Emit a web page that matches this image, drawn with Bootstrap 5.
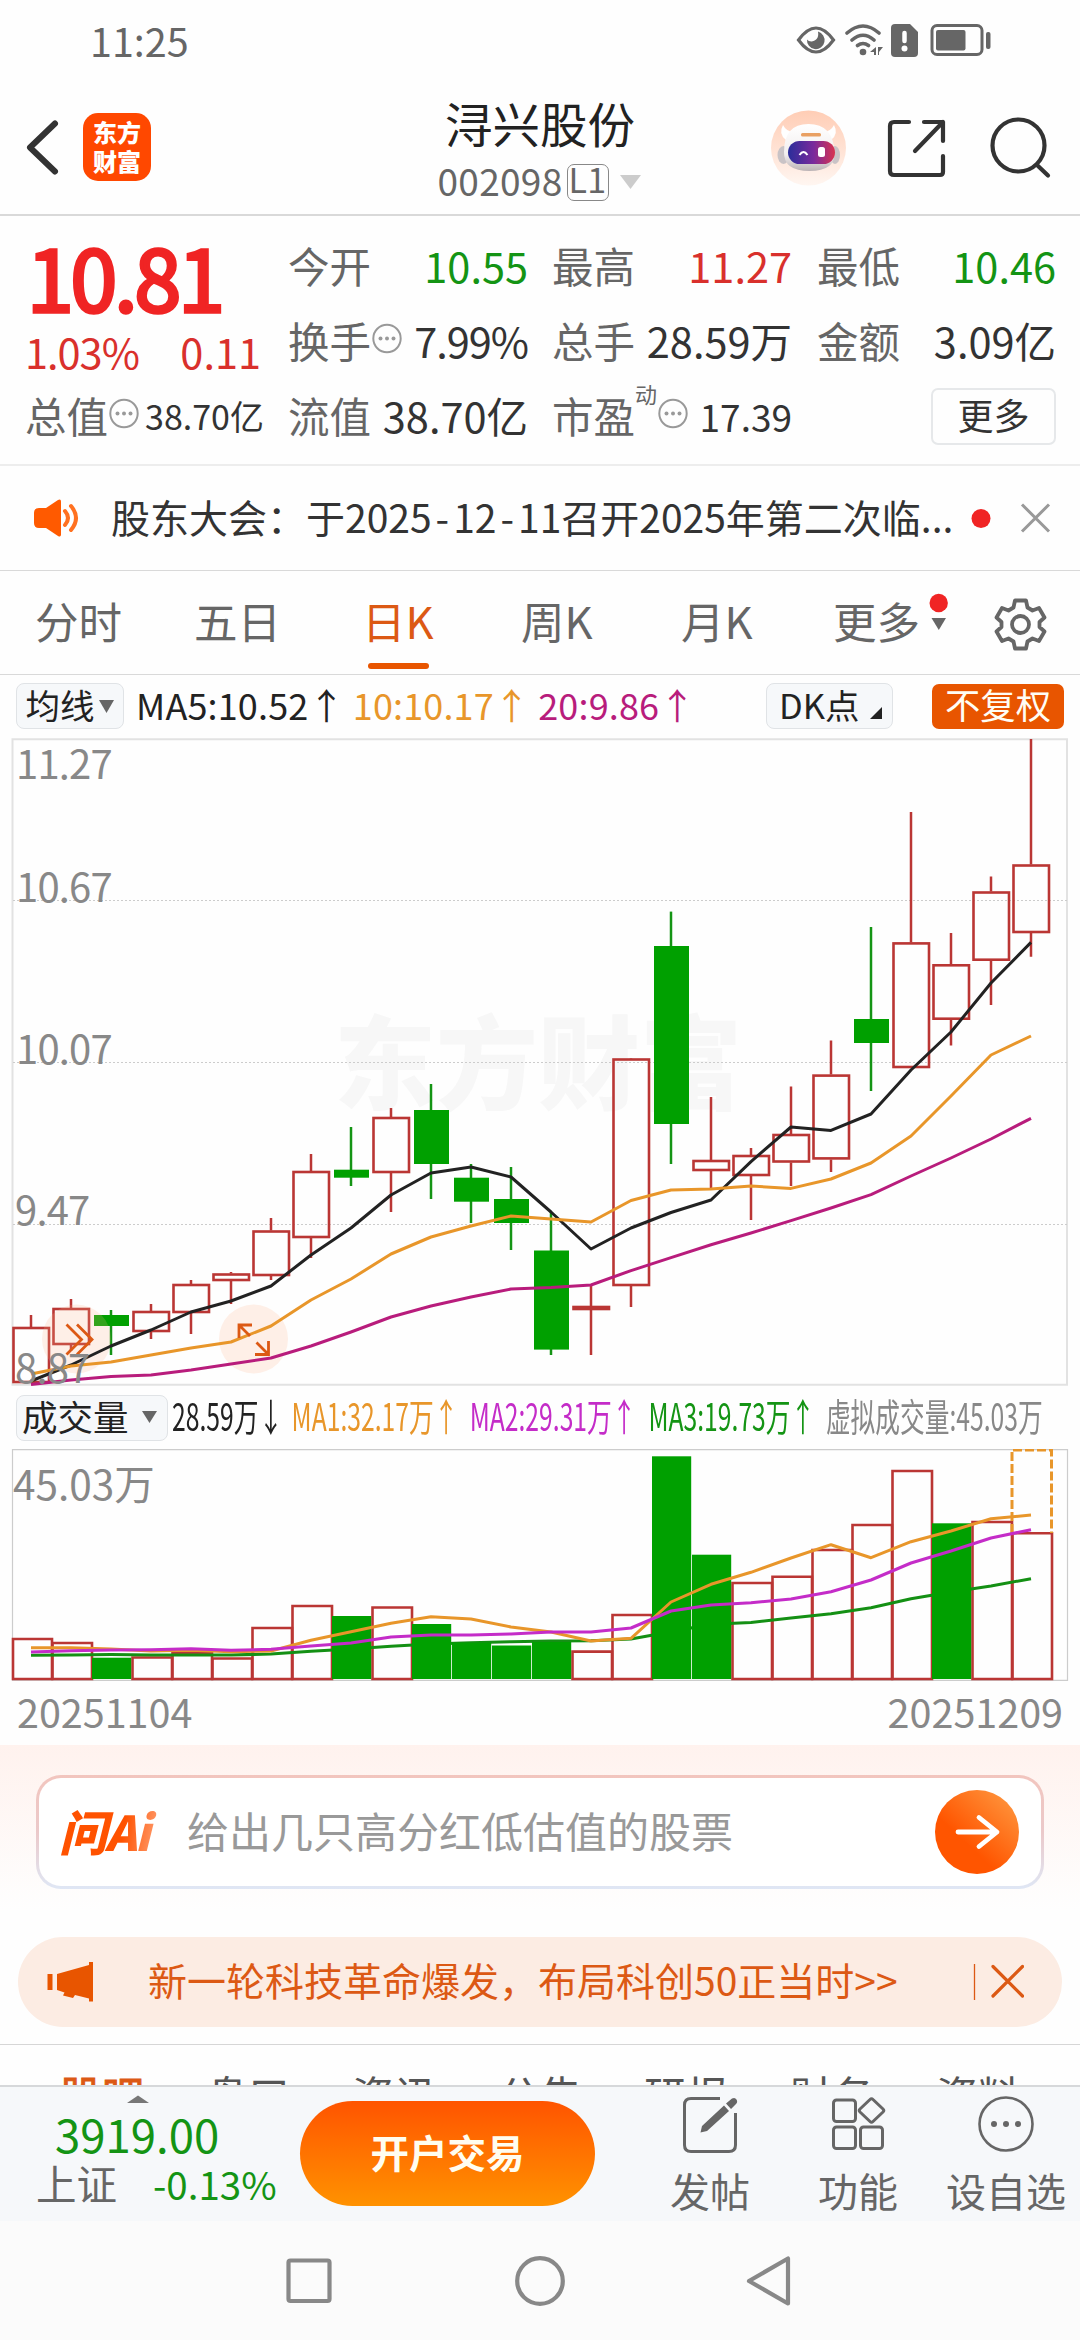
<!DOCTYPE html>
<html lang="zh-CN">
<head>
<meta charset="utf-8">
<meta name="viewport" content="width=device-width, initial-scale=1">
<title>浔兴股份 002098</title>
<link rel="stylesheet" href="https://cdn.jsdelivr.net/npm/bootstrap@5.3.0/dist/css/bootstrap.min.css">
<style>
  body{font-family:"Noto Sans CJK SC","Noto Sans",sans-serif;width:1080px;height:2340px;overflow:hidden;background:#fefefe;color:#333;line-height:1}
  svg{display:block;flex:none}
  span,div,a{white-space:nowrap}
  .g6{color:#666}.up{color:#d9302c}.dn{color:#149414}.ora{color:#e8962a}.pur{color:#b81c7c}.pnk{color:#c42cc8}.brand{color:#dc5914}
  .statusbar{height:80px;padding:0 89px 0 90px}
  .statusbar .clock{font-size:39.5px;color:#666}
  .apphead{height:136px;border-bottom:2px solid #d9d9d9}
  .side{width:360px}
  .applogo{width:68px;height:68px;border-radius:15px;background:#ff4800;color:#fff;font-weight:900;font-size:24px;line-height:29px;padding-top:4px}
  .stockname{font-size:47.5px;color:#222;line-height:50px;margin-top:18px}
  .stockcode{font-size:37px;height:44px;margin-top:12px;line-height:37px;letter-spacing:.3px}
  .lvl{border:1.5px solid #888;border-radius:7px;width:42px;height:37px;font-size:34px;line-height:28px}
  .quote{height:250px;border-bottom:2px solid #ededed;padding:14px 24px 0 25px}
  .q{height:75px;padding-bottom:3px;font-size:41.5px}
  .q .lb{font-size:41.5px;color:#666}
  .c1{width:239px}.c2{width:240px;margin-left:24px}.c3{width:240px;margin-left:24px}.c4{width:239px;margin-left:25px}
  .price{font-size:84px;height:88px;line-height:92px;color:#f02424;-webkit-text-stroke:3.5px #f02424;letter-spacing:-3px;padding-left:2px}
  .change{font-size:41.5px;line-height:66px;height:62px;padding-right:3px}
  .sup{font-size:22px;line-height:26px;color:#666;align-self:flex-start}
  .morebtn{width:125px;height:57px;border:2px solid #e6e8ea;border-radius:7px;font-size:36px;color:#333;padding:0 0 5px}
  .notice{height:105px;border-bottom:1.5px solid #d9d9d9;padding:0 29px 0 33px;font-size:39px}
  .ktabs{height:104px;border-bottom:1.5px solid #d9d9d9;font-size:43.5px;color:#666;padding-bottom:3px}
  .ktabs .it{width:160px}
  .on{color:#dc5914}
  .bar{position:absolute;left:6px;bottom:-26px;width:61px;height:6px;border-radius:3px;background:#e85500}
  .marow{height:62px;padding:0 16px;font-size:36px}
  .pill{background:#f6f8fa;border:1.5px solid #e0e3e6;border-radius:8px;height:46px;font-size:34.5px;color:#222;padding-bottom:4px}
  .nofq{background:#e85500;color:#fffdf5;border-radius:7px;width:132px;height:45px;font-size:35.3px;padding-bottom:4px}
  .volrow{height:63px;padding:0 16px}
  .cond{font-size:38px;transform:scaleX(.65);transform-origin:0 50%;width:1360px;padding-bottom:5px}
  .ai{background:linear-gradient(#fff2ee,#fefefe 165px);height:192px;padding:30px 36px 0}
  .aibox{height:114px;border:3px solid transparent;border-radius:25px;background:linear-gradient(#fff,#fff) padding-box,linear-gradient(#f2c5be,#ebc9ca 50%,#dfe7f5) border-box;padding:0 22px 0 20px}
  .ailogo{font-size:48px;font-weight:900;font-style:italic;width:128px;letter-spacing:-2px;background:linear-gradient(100deg,#ff5200 50%,#ff9a6a 75%);-webkit-background-clip:text;color:transparent;line-height:60px;padding-bottom:5px}
  .promo{height:90px;border-radius:45px;background:#fcece3;margin:0 18px;padding:0 38px 0 29px;font-size:39px;color:#dc5914}
  .subtabs{height:41px;margin-top:17px;border-top:1.5px solid #d6d6d6;overflow:hidden;padding:28px 0 0 60px;font-size:42px;line-height:42px;color:#555}
  .subtabs span{width:146px;flex:none}
  .subtabs .brand{-webkit-text-stroke:1px #dc5914}
  .dock{height:136px;background:#f6f8fa;border-top:2px solid #d6d8da}
  .trade{width:295px;height:105px;border-radius:53px;background:linear-gradient(#ff5400,#ff9200);color:#fffdf0;font-size:38.5px;font-weight:700;padding-bottom:5px}
  .tool{font-size:40px;color:#666;padding-top:9px}
  .tool svg{margin-bottom:17px}
  .sysnav{height:120px;background:#fbfbfb}
</style>
</head>
<body>
<div class="statusbar d-flex justify-content-between align-items-center">
  <span class="clock">11:25</span>
  <svg width="195" height="36" viewBox="795 22 195 36" fill="none" stroke="#666">
    <path d="M797.500 40Q815 16 832.500 40Q815 64 797.500 40Z" stroke-width="3.200"/>
    <path d="M817 31.500a8.800 9 0 1 1-11 8c3 4 13 2 11-8z" fill="#666" stroke="none"/>
    <path d="M846 33q16-14 32 0M851 40q11-9.500 22 0M856.500 45.500q5.500-4 11 0" stroke-width="3.600" stroke-linecap="round"/>
    <circle cx="862" cy="52" r="3.300" fill="#666" stroke="none"/>
    <path d="M875 47v8h-2v-3h-4zM877 47h5l-4 5v3h-1z" fill="#666" stroke="none"/>
    <path d="M894 24h15l8 8v21q0 4-4 4h-19q-4 0-4-4V28q0-4 4-4z" fill="#666" stroke="none"/>
    <path d="M903.500 33v8" stroke="#fff" stroke-width="4.500" stroke-linecap="round"/><circle cx="903.500" cy="48.500" r="3" fill="#fff" stroke="none"/>
    <rect x="931" y="25.500" width="50" height="29" rx="5" stroke-width="3"/>
    <rect x="935" y="30" width="29.500" height="20.500" rx="2" fill="#666" stroke="none"/>
    <rect x="985" y="32" width="4.500" height="17" rx="2" fill="#666" stroke="none"/>
  </svg>
</div>

<header class="apphead d-flex">
  <div class="side d-flex align-items-center">
    <svg width="83" height="70" viewBox="0 113 83 70"><path d="M55 124.500L30 148.500L55 172.500" fill="none" stroke="#333" stroke-width="6" stroke-linecap="round" stroke-linejoin="round"/></svg>
    <div class="applogo text-center">东方<br>财富</div>
  </div>
  <div class="side text-center">
    <div class="stockname">浔兴股份</div>
    <div class="stockcode d-flex justify-content-center align-items-center g6"><span class="pb-1">002098</span><span class="lvl ms-1">L1</span>
      <svg class="ms-2" width="26" height="16"><path d="M3 1h21L13.500 15z" fill="#ccc"/></svg></div>
  </div>
  <div class="side">
    <svg width="360" height="80" viewBox="720 108 360 80" style="margin-top:28px" fill="none" stroke="#333">
      <defs><linearGradient id="rb" x1="0" y1="0" x2="0" y2="1"><stop offset="0" stop-color="#ffcdb5"/><stop offset="1" stop-color="#fff6f1"/></linearGradient>
      <linearGradient id="vs" x1="0" x2="1"><stop offset="0" stop-color="#2a2d9a"/><stop offset=".55" stop-color="#7a2a9c"/><stop offset="1" stop-color="#d83450"/></linearGradient>
      <linearGradient id="hd" x1="0" y1="0" x2="0" y2="1"><stop offset="0" stop-color="#fff"/><stop offset=".65" stop-color="#f2eeee"/><stop offset="1" stop-color="#bbb3b5"/></linearGradient></defs>
      <g stroke="none">
        <circle cx="808.500" cy="148" r="37.500" fill="url(#rb)"/>
        <path d="M786 140q-8-6-3-15q3 6 10 7zM831 140q8-6 3-15q-3 6-10 7z" fill="#fff"/>
        <ellipse cx="783.500" cy="155" rx="6" ry="9" fill="#c9c3c6"/><ellipse cx="835" cy="155" rx="5" ry="9" fill="#c9c3c6"/>
        <path d="M784 152q0-28 24.500-28t26 28q1 19-25 19t-25.500-19z" fill="url(#hd)"/>
        <rect x="788" y="141" width="47" height="23" rx="11.500" fill="url(#vs)"/>
        <rect x="801" y="133" width="20" height="3.500" rx="1.500" fill="#e9a063"/>
        <rect x="818" y="147" width="7" height="10" rx="2.500" fill="#fff"/>
      </g>
      <path d="M799.500 155q4-6 8 0" stroke="#fff" stroke-width="2"/>
      <path d="M909 122h-15q-4 0-4 4v45q0 4 4 4h46q3 0 3-3v-16M924 122h19v19M943 122L915 151" stroke-width="4.200" stroke-linecap="round" stroke-linejoin="round"/>
      <circle cx="1018.500" cy="145.500" r="26" stroke-width="4.200"/><path d="M1037 165L1048 175.500" stroke-width="4.200" stroke-linecap="round"/>
    </svg>
  </div>
</header>

<section class="quote d-flex">
  <div class="c1">
    <div class="price">10.81</div>
    <div class="change d-flex justify-content-between up"><span style="letter-spacing:-1px">1.03%</span><span>0.11</span></div>
    <div class="q d-flex align-items-center"><span class="lb">总值</span><svg class="mb-1" width="32" height="32"><use href="#dots"/></svg><span class="ms-auto" style="font-size:34px">38.70亿</span></div>
  </div>
  <div class="c2">
    <div class="q d-flex align-items-center justify-content-between"><span class="lb">今开</span><span class="dn">10.55</span></div>
    <div class="q d-flex align-items-center"><span class="lb">换手</span><svg class="mb-1" width="32" height="32" viewBox="0 0 32 32"><g id="dots"><circle cx="16" cy="15.500" r="13.700" fill="none" stroke="#999" stroke-width="2"/><g fill="#999"><circle cx="9.500" cy="15.500" r="2"/><circle cx="16" cy="15.500" r="2"/><circle cx="22.500" cy="15.500" r="2"/></g></g></svg><span class="ms-auto" style="letter-spacing:-1px">7.99%</span></div>
    <div class="q d-flex align-items-center justify-content-between"><span class="lb">流值</span><span>38.70亿</span></div>
  </div>
  <div class="c3">
    <div class="q d-flex align-items-center justify-content-between"><span class="lb">最高</span><span class="up">11.27</span></div>
    <div class="q d-flex align-items-center justify-content-between"><span class="lb">总手</span><span>28.59万</span></div>
    <div class="q d-flex align-items-center"><span class="lb">市盈</span><span class="sup">动</span><svg class="mb-1" width="32" height="32"><use href="#dots"/></svg><span class="ms-auto" style="font-size:37px">17.39</span></div>
  </div>
  <div class="c4">
    <div class="q d-flex align-items-center justify-content-between"><span class="lb">最低</span><span class="dn">10.46</span></div>
    <div class="q d-flex align-items-center justify-content-between"><span class="lb">金额</span><span>3.09亿</span></div>
    <div class="q d-flex align-items-center justify-content-end"><span class="morebtn d-flex align-items-center justify-content-center">更多</span></div>
  </div>
</section>

<section class="notice d-flex align-items-center">
  <svg width="78" height="40" viewBox="0 0 78 40"><path d="M6 10h7L25 2q3-1.500 3 1.500v33q0 3-3 1.500L13 30H6q-5 0-5-5V15q0-5 5-5z" fill="#ff5a00"/><path d="M32 13q6 7 0 14M38 8q10 12 0 24" fill="none" stroke="#ff7120" stroke-width="4" stroke-linecap="round"/></svg>
  <span class="pb-1">股东大会：于2025<span class="mx-1">-</span>12<span class="mx-1">-</span>11召开2025年第二次临...</span>
  <svg class="ms-auto" width="82" height="32" viewBox="969 501 82 32"><circle cx="981" cy="517.500" r="9.500" fill="#f02424"/><path d="M1022 503.500l27 27m0-27l-27 27" stroke="#999" stroke-width="3"/></svg>
</section>

<nav class="ktabs d-flex align-items-center">
  <span class="it" style="padding-left:35px">分时</span><span class="it" style="padding-left:34px">五日</span>
  <span class="it on" style="padding-left:42px"><span class="position-relative d-inline-block">日K<i class="bar"></i></span></span>
  <span class="it" style="padding-left:41px">周K</span><span class="it" style="padding-left:41px">月K</span>
  <span style="padding-left:33px;width:127px">更多</span>
  <svg width="130" height="60" viewBox="925 590 130 60" fill="none"><circle cx="936.700" cy="602" r="9.200" fill="#f02424"/><path d="M929.500 617h14.500l-7.200 12z" fill="#666"/>
    <g stroke="#666" stroke-width="3.800" stroke-linejoin="round"><path d="M1013 599.500h11l1.500 7 5 3 6.500-2.500 5.500 9.500-5 4.500v5l5 4.500-5.500 9.500-6.500-2.500-5 3-1.500 7h-11l-1.500-7-5-3-6.500 2.500-5.500-9.500 5-4.500v-5l-5-4.500 5.500-9.500 6.500 2.500 5-3z"/><circle cx="1018.500" cy="623.500" r="8.500"/></g></svg>
</nav>

<div class="marow d-flex align-items-center">
  <span class="pill d-flex align-items-center justify-content-center" style="width:108px">均线<svg class="mt-1" width="20" height="14"><path d="M4 1h15L11.500 14z" fill="#666"/></svg></span>
  <span class="pb-1" style="padding-left:12px;color:#222;letter-spacing:.15px">MA5:10.52↑ <span class="ora">10:10.17↑</span> <span class="pur">20:9.86↑</span></span>
  <span class="pill d-flex align-items-center ms-auto" style="width:127px;padding-left:12px">DK点<svg style="margin:18px 0 0 10px" width="12" height="12"><path d="M12 0v12H0z" fill="#222"/></svg></span>
  <span class="nofq d-flex align-items-center justify-content-center" style="margin-left:39px">不复权</span>
</div>

<svg id="kchart" width="1080" height="649" viewBox="0 736 1080 649"></svg>

<div class="volrow d-flex align-items-center">
  <span class="pill d-flex align-items-center flex-shrink-0" style="width:152px;padding-left:5px;font-size:35.500px">成交量<svg style="margin:2px 0 0 13px" width="16" height="13"><path d="M0 1h15L7.500 13z" fill="#666"/></svg></span>
  <div style="width:880px;padding-left:4px"><div class="cond d-flex"><span style="color:#222;width:184px">28.59万↓</span><span class="ora" style="width:274px">MA1:32.17万↑</span><span class="pnk" style="width:275px">MA2:29.31万↑</span><span class="dn" style="width:273px">MA3:19.73万↑</span><span style="color:#888">虚拟成交量:45.03万</span></div></div>
</div>

<svg id="vchart" width="1080" height="296" viewBox="0 1448 1080 296"></svg>

<section class="ai">
  <div class="aibox d-flex align-items-center">
    <span class="ailogo">问Ai</span>
    <span style="font-size:42px;color:#999;padding-bottom:4px">给出几只高分红低估值的股票</span>
    <svg class="ms-auto" width="84" height="84" viewBox="936 1789 84 84"><defs><linearGradient id="go" x1=".2" y1=".8" x2=".85" y2=".1"><stop offset=".25" stop-color="#ff5500"/><stop offset="1" stop-color="#ff9038"/></linearGradient></defs><circle cx="978" cy="1831" r="42" fill="url(#go)"/><path d="M959 1831h38M980 1816.500L998 1831L980 1845.500" fill="none" stroke="#fff" stroke-width="4.800" stroke-linecap="round" stroke-linejoin="round"/></svg>
  </div>
</section>

<div class="promo d-flex align-items-center">
  <svg width="101" height="40" viewBox="47 1961 101 40" fill="#e85500"><path d="M47.500 1973h5v16h-5zM57 1973L89 1964v-3h4v39.500h-4v-3L75 1994l-2 3-10-2.500 1.500-3L57 1989z"/></svg>
  <span style="padding-bottom:5px">新一轮科技革命爆发，布局科创50正当时&gt;&gt;</span>
  <svg class="ms-auto" width="51" height="38" viewBox="973 1962 51 38" fill="none" stroke="#dc5914"><path d="M974.500 1963v36" stroke-width="1.300"/><path d="M993 1965.500l29.500 29.500m0-29.500l-29.500 29.500" stroke-width="3.200" stroke-linecap="round"/></svg>
</div>

<div class="subtabs d-flex"><span class="brand">股吧</span><span>盘口</span><span>资讯</span><span>公告</span><span>研报</span><span>财务</span><span>资料</span></div>

<footer class="dock d-flex">
  <div style="width:300px">
    <svg style="margin:8px 0 0 127px" width="22" height="8"><path d="M0 8L11 0.500L22 8z" fill="#777"/></svg>
    <div class="dn" style="font-size:45.500px;line-height:60px;padding-left:55px">3919.00</div>
    <div class="d-flex align-items-center" style="padding-left:36px;line-height:40px"><span class="g6" style="font-size:40.500px">上证</span><span class="dn" style="font-size:38.500px;margin-left:36px">-0.13%</span></div>
  </div>
  <div class="trade d-flex align-items-center justify-content-center" style="margin-top:14px">开户交易</div>
  <div class="tool d-flex flex-column align-items-center" style="width:148px;margin-left:41px">
    <svg width="56" height="57" viewBox="682 2096 56 57" fill="none"><path d="M720 2098.500h-29q-6.500 0-6.500 6.500v40q0 6.500 6.500 6.500h38q6.500 0 6.500-6.500v-32" stroke="#666" stroke-width="3"/><path d="M702 2126l-1.500 6.500 6.500-1.500 22-20-5-5.500zM726 2103.500l6-5q3-1.500 4.500 1t-.5 4.500l-5 5z" fill="#666"/></svg>发帖</div>
  <div class="tool d-flex flex-column align-items-center" style="width:148px">
    <svg width="56" height="57" viewBox="830 2096 56 57" fill="none" stroke="#666" stroke-width="3"><rect x="833.500" y="2100" width="22" height="21.500" rx="3"/><rect x="833.500" y="2127" width="22" height="21.500" rx="3"/><rect x="860.500" y="2127" width="22" height="21.500" rx="3"/><path d="M870 2099.500q1.500-1.500 3 0l10 9.500q1.500 1.500 0 3l-10 9.500q-1.500 1.500-3 0l-10-9.500q-1.500-1.500 0-3z"/></svg>功能</div>
  <div class="tool d-flex flex-column align-items-center" style="width:148px">
    <svg width="56" height="57" viewBox="0 0 56 57" fill="none"><circle cx="28" cy="28" r="26.500" stroke="#666" stroke-width="2.600"/><g fill="#666"><circle cx="16" cy="28" r="3"/><circle cx="28" cy="28" r="3"/><circle cx="40" cy="28" r="3"/></g></svg>设自选</div>
</footer>
<div class="sysnav d-flex justify-content-center align-items-center">
  <svg width="520" height="60" viewBox="280 2250 520 60" fill="none" stroke="#888" stroke-width="4.200" stroke-linejoin="round"><rect x="288.500" y="2259.500" width="41" height="40.500" rx="2"/><circle cx="540" cy="2280" r="22.800"/><path d="M749 2280L788 2257.500v45z"/></svg>
</div>

<script src="https://cdn.jsdelivr.net/npm/bootstrap@5.3.0/dist/js/bootstrap.bundle.min.js"></script>
<script>
const RED='#ba3634', GREEN='#00a000', cx=i=>31+40*i;
// [rising, high, bodyTop, bodyBottom, low]
const K=[[1,1314,1326,1382,1382],[1,1298,1307,1344,1350],[0,1309,1314,1325,1354],[1,1303,1310,1331,1338],[1,1279,1283,1312,1333],[1,1271,1272.5,1280,1303],[1,1217,1229.5,1275,1279],[1,1153,1170,1237,1257],[0,1126,1168.7,1176.7,1185],[1,1107,1116,1172,1211],[0,1083,1109,1163,1198],[0,1163,1176.7,1200.7,1222],[0,1166,1198,1222,1249],[0,1211,1249.5,1348.6,1354],[1,1285,1305,1309,1354],[1,1057,1057.5,1285,1306],[0,910.6,945,1123,1163],[1,1096,1159,1170,1187],[1,1147,1154,1175,1219],[1,1085.6,1133,1161.5,1185],[1,1039.6,1073.6,1158.4,1171],[0,926,1018,1042,1090],[1,811,941.4,1067,1067],[1,932,963.3,1018.7,1044.6],[1,875.4,890.5,959.7,1004],[1,738,863.5,932,955.7]];
const M5=[1380,1364,1345,1329,1311,1300,1285,1254,1227,1194,1172,1166,1176,1211,1248,1227,1211.5,1199,1160.6,1126,1129.4,1113,1069,1031,982,941.4];
const M10=[1373,1365,1361,1354,1347,1341,1325,1299,1278,1253,1236,1225,1215,1218,1221,1199.5,1189,1188,1185,1187.4,1178,1162,1135,1095,1054,1035];
const M20=[1383.5,1379,1375.5,1374,1369,1363,1357,1345,1331,1316,1305,1296,1288,1286.5,1284,1269.6,1256.6,1243.7,1232,1219.6,1207,1193.7,1175,1157,1138,1117.3];
const V=[1638,1642,1656.7,1656.5,1652,1657.5,1627,1605,1615,1606.5,1623,1641.7,1644.5,1641,1650.6,1614,1455.3,1553.7,1582,1575.7,1549,1524,1470,1522.3,1521,1532.3];
const FALL=[2,8,10,11,12,13,16,17,23];
const V1=[1646.7,1646.7,1648,1650,1649.3,1650.7,1650,1639.3,1630.7,1622.3,1615.7,1618,1626,1631,1640,1637.3,1601,1583.3,1571.3,1557,1543.7,1556.7,1540.7,1530,1517.7,1514];
const V2=[1651,1649.7,1649,1648.7,1647.7,1649.3,1648.3,1645,1642,1636,1634,1634,1633,1631,1631,1627,1610,1604,1601.7,1598,1590.7,1579,1562,1550,1537,1528.7];
const V3=[1654.3,1654,1653.6,1654,1654,1654,1653,1650.3,1648,1645.3,1643,1641.7,1640.7,1640,1639.7,1638,1630.7,1623.3,1621.5,1617,1612.7,1606.7,1597.7,1591,1585,1577.7];
const line=(a,c)=>`<polyline fill="none" stroke="${c}" stroke-width="3" stroke-linejoin="round" points="${a.map((y,i)=>cx(i)+','+y).join(' ')}"/>`;
const label=(x,y,t,s=40,e='')=>`<text x="${x}" y="${y}" font-size="${s}" fill="#888" ${e}>${t}</text>`;
let k='<text x="334" y="1101" font-size="102" font-weight="900" fill="#f7f7f7">东方财富</text>';
k+='<path d="M12.500 738.200H1067V1383.700H12.500Z" fill="none" stroke="#e2e2e2" stroke-width="2"/>';
[899.5,1061.5,1223.5].forEach(y=>k+=`<path d="M13 ${y}H1067" stroke="#ccc" stroke-width="1" stroke-dasharray="2 2"/>`);
K.forEach(([r,h,t,b,l],i)=>{const x=cx(i);
  k+= r?`<path d="M${x} ${h}V${t}M${x} ${b}V${l}" stroke="${RED}" stroke-width="2.500"/><rect x="${x-17.5}" y="${t+1}" width="35.500" height="${b-t-2}" fill="none" stroke="${RED}" stroke-width="2.600"/>`
       :`<path d="M${x} ${h}V${l}" stroke="#149414" stroke-width="2.500"/><rect x="${x-17}" y="${t}" width="35" height="${b-t}" fill="${GREEN}"/>`;});
k+='<g fill="#ffb48c" fill-opacity=".2"><circle cx="76.500" cy="1338" r="34.500"/><circle cx="253.500" cy="1338" r="34.500"/></g>';
k+=line(M5,'#222')+line(M10,'#e8962a')+line(M20,'#b81c7c');
k+='<g fill="none" stroke="#dc5914" stroke-width="2.800"><path d="M66.500 1323.500L81.500 1338.500L66.500 1353.500M77 1323.500L92 1338.500L77 1353.500"/><path d="M252 1324H239V1337M239 1324L250 1335M255 1353.500H268.500V1340M268.500 1353.500L256.500 1341.500"/></g>';
[[16,777.6,'11.27'],[16,901,'10.67'],[16,1063,'10.07'],[15,1224,'9.47'],[15,1382,'8.87']].forEach(a=>k+=label(...a,40,'letter-spacing="-.8"'));
document.getElementById('kchart').innerHTML=k;

let v='<path d="M12.500 1448.700H1067.500V1679.300H12.500Z" fill="none" stroke="#ccc" stroke-width="1.200"/>', g='';
v+=label(13,1499,'45.03万',40.5);
V.forEach((y,i)=>{const x=cx(i);
  if(!FALL.includes(i)) v+=`<path d="M${i?x-18.5:13} ${y}H${x+21}V1678H${i?x-18.5:13}Z" fill="none" stroke="${RED}" stroke-width="2.600"/>`;
  else g+=`<rect x="${x-19}" y="${y}" width="39.200" height="${1678-y}" fill="${GREEN}"/>`;});
v+='<path d="M1012 1532V1449H1051.500V1532" fill="none" stroke="#e8962a" stroke-width="3" stroke-dasharray="9 3"/>';
v+=line(V3,'#149014')+g+line(V1,'#e8962a')+line(V2,'#c42cc8');
v+=label(17,1727,'20251104',39.5)+label(1063,1727,'20251209',39.5,'text-anchor="end"');
document.getElementById('vchart').innerHTML=v;
</script>
</body>
</html>
